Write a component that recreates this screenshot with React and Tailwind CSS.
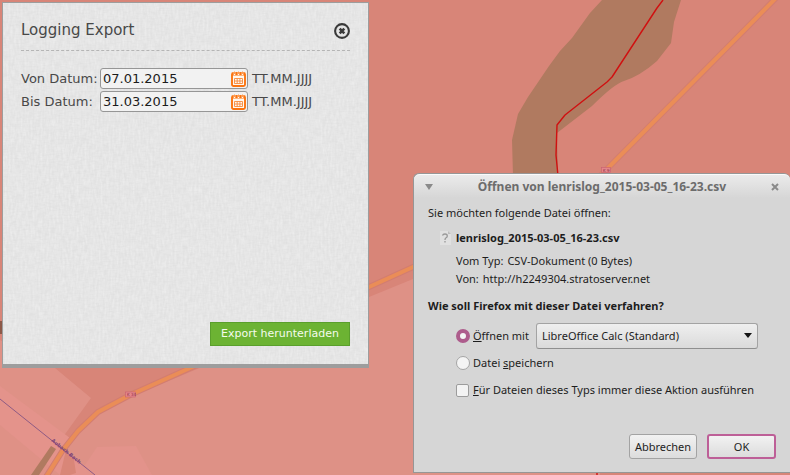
import { useState } from "react";

function MapBackground() {
  return (
    <svg
      className="absolute inset-0 h-full w-full"
      viewBox="0 0 790 475"
      preserveAspectRatio="xMinYMin slice"
      aria-hidden="true"
    >
      <rect width="790" height="475" fill="#d88578" />
      {/* fields */}
      <path d="M0 340L55 368L91 398L63 437L46 475H0Z" fill="#df9186" />
      <path d="M413 279L369 297L190 372L130 397L98 414L78 433L63 452L50 475H600V279Z" fill="#de9186" />
      <path d="M0 386L70 438L62 447L95 475H60L0 425Z" fill="#e4938b" />
      <path d="M60 475L66 450L74 460L76 473L70 475Z" fill="#d98678" />
      <path d="M85 465L97 447L136 446L152 475H88Z" fill="#e3938b" />
      <path d="M0 321H3V334H0Z" fill="#8d5948" />
      {/* forest */}
      <path
        d="M602 0L590 13L572 38L560 51L549 66L528 97L518 114L512 140L513 176H558L557 133L592 106Q614 84 624 81Q640 76 657 61L671 43L674 22L681 0Z"
        fill="#b07a60"
      />
      <path d="M51 446L56 449L39 475H31Z" fill="#b07a60" />
      {/* roads */}
      <g fill="none" strokeLinejoin="round">
        <path
          d="M776 -2L609 167L590 186L413 267L369 287L190 368L130 395L98 412L78 431L63 450L46 477"
          stroke="#d27d71"
          strokeWidth="6"
        />
        <path
          d="M776 -2L609 167L590 186L413 267L369 287L190 368L130 395L98 412L78 431L63 450L46 477"
          stroke="#ea8d57"
          strokeWidth="4"
        />
        <path d="M663 0L657 8L612 77L607 82L565 115L557 125L556 155L558 176" stroke="#d01010" strokeWidth="1.4" />
        <path d="M597 470V475" stroke="#d01010" strokeWidth="1.4" />
        <path d="M0 399L95 475" stroke="#8d5a83" strokeWidth="1" />
      </g>
      <g fill="#e3868a" stroke="#c95f70" strokeWidth="0.6">
        <rect x="125.500" y="392" width="10" height="5" />
        <rect x="601.500" y="167.500" width="9" height="5" />
      </g>
      <g fontFamily="DejaVu Sans, sans-serif" fontSize="4" fill="#8c2f4b">
        <text x="127" y="396">K 34</text>
        <text x="603" y="172">K 9</text>
      </g>
      <text
        transform="translate(51 441) rotate(39)"
        fontFamily="DejaVu Sans, sans-serif"
        fontSize="5"
        fontWeight="bold"
        fill="#7c4478"
      >
        Aubach Bach
      </text>
    </svg>
  );
}

function LinenTexture() {
  return (
    <svg className="absolute inset-0 h-full w-full" aria-hidden="true">
      <filter id="linen-v">
        <feTurbulence type="fractalNoise" baseFrequency="0.5 0.12" numOctaves="2" seed="4" />
        <feColorMatrix values="0 0 0 0 1  0 0 0 0 1  0 0 0 0 1  0.6 0 0 0 -0.2" />
      </filter>
      <filter id="linen-h">
        <feTurbulence type="fractalNoise" baseFrequency="0.15 0.6" numOctaves="2" seed="9" />
        <feColorMatrix values="0 0 0 0 0.6  0 0 0 0 0.6  0 0 0 0 0.6  0.4 0 0 0 -0.16" />
      </filter>
      <rect width="100%" height="100%" filter="url(#linen-v)" />
      <rect width="100%" height="100%" filter="url(#linen-h)" />
    </svg>
  );
}

function CalendarIcon() {
  return (
    <svg viewBox="0 0 15 16" className="h-4 w-[15px]" fill="none" aria-hidden="true">
      <rect x="1" y="2" width="13" height="13" rx="1.500" fill="#fff8f0" stroke="#fb7410" strokeWidth="1.900" />
      <path d="M1 2H14V4.500H1Z" fill="#fb7410" />
      <path d="M3.500 0.500V4M7.500 0.500V4M11.500 0.500V4" stroke="#fff8f0" strokeWidth="1.600" />
      <path d="M3.500 0.500V3M7.500 0.500V3M11.500 0.500V3" stroke="#fb7410" strokeWidth="0.700" />
      <path d="M3.500 7.500H11.500V12.500H3.500ZM3.500 10H11.500M6.200 7.500V12.500M8.900 7.500V12.500" stroke="#f78a3c" strokeWidth="0.900" />
    </svg>
  );
}

function DateRow({ id, label, value }) {
  const [date, setDate] = useState(value);
  return (
    <div className="flex h-[23px] items-center">
      <label htmlFor={id} className="w-[79px] whitespace-nowrap">
        {label}
      </label>
      <div className="flex h-[21px] w-[148px] items-center rounded-[3px] border border-[#969696] bg-[#f2f2f2] pr-px">
        <input
          id={id}
          type="text"
          value={date}
          onChange={(e) => setDate(e.target.value)}
          className="min-w-0 flex-1 bg-transparent pl-0.5 text-[#1c1c1c] outline-none"
        />
        <button type="button" aria-label={`${label} Kalender`}>
          <CalendarIcon />
        </button>
      </div>
      <span className="pl-1">TT.MM.JJJJ</span>
    </div>
  );
}

function ExportPanel() {
  return (
    <section className="absolute top-0.5 left-0.5 flex h-[366px] w-[367px] flex-col border border-b-4 border-[#9d9d9d] bg-[#e4e4e4] font-['DejaVu_Sans',sans-serif] text-[13px] text-[#484848]">
      <LinenTexture />
      <div className="relative flex flex-1 flex-col px-[18px] pb-[18px]">
        <header className="flex h-12 items-center justify-between border-b border-dashed border-[#b5b5b5] pt-2">
          <h1 className="text-[15px]">Logging Export</h1>
          <button type="button" aria-label="Schließen">
            <svg viewBox="0 0 16 16" className="size-4" fill="none" aria-hidden="true">
              <circle cx="8" cy="8" r="6.900" stroke="#393939" strokeWidth="2.100" />
              <path d="M5.700 5.700L10.300 10.300M10.300 5.700L5.700 10.300" stroke="#393939" strokeWidth="2.600" />
            </svg>
          </button>
        </header>
        <form className="flex flex-1 flex-col pt-4">
          <DateRow id="from" label="Von Datum:" value="07.01.2015" />
          <DateRow id="to" label="Bis Datum:" value="31.03.2015" />
          <button
            type="button"
            className="mt-auto h-6 w-[140px] self-end border border-[#5a9f2c] bg-[#6cb333] text-[11px] whitespace-nowrap text-[#f4fbed]"
          >
            Export herunterladen
          </button>
        </form>
      </div>
    </section>
  );
}

function OpenDialog() {
  const [action, setAction] = useState("open");
  const radio =
    "size-[14px] shrink-0 appearance-none rounded-full border border-[#a5a5a5] bg-[#f4f4f4] checked:border-4 checked:border-[#ad5c8c]";
  const button =
    "h-[25px] rounded-[3px] bg-linear-to-b from-[#f2f2f2] to-[#dcdcdc] text-center";
  return (
    <section
      role="dialog"
      aria-labelledby="dialog-title"
      className="absolute top-[173px] right-0 flex h-[300px] w-[377px] flex-col rounded-t-md border border-r-0 border-[#969696] bg-[#d6d6d6] font-['Noto_Sans',sans-serif] text-[11px] leading-4 text-[#1d1d1d]"
    >
      <header className="flex h-6 items-center rounded-t-md border-t border-[#fafafa] bg-linear-to-b from-[#ebebeb] to-[#d6d6d6] pr-[11px] pl-[11px]">
        <button type="button" aria-label="Menü">
          <svg viewBox="0 0 8 6" className="h-1.5 w-2" aria-hidden="true">
            <path d="M0 0H8L4 6Z" fill="#8a8a8a" />
          </svg>
        </button>
        <h2 id="dialog-title" className="flex-1 text-center text-[12px] font-bold whitespace-nowrap text-[#6c6c6c]">
          Öffnen von lenrislog_2015-03-05_16-23.csv
        </h2>
        <button type="button" aria-label="Schließen">
          <svg viewBox="0 0 8 8" className="size-2" aria-hidden="true">
            <path d="M1 1L7 7M7 1L1 7" stroke="#8a8a8a" strokeWidth="2" />
          </svg>
        </button>
      </header>
      <div className="flex flex-1 flex-col pr-[14px] pb-[13px] pl-[14px]">
        <p className="pt-[7px]">Sie möchten folgende Datei öffnen:</p>
        <div className="flex items-center gap-1 pt-[9px] pl-[11px]">
          <svg viewBox="0 0 13 16" className="h-4 w-[13px]" aria-hidden="true">
            <path d="M1 1H9L12 4V15H1Z" fill="#e0e0e0" />
            <path d="M9 1V4H12" fill="#bdbdbd" />
            <path d="M3.500 5.500Q4 4 6 4Q8.300 4 8.300 6Q8.300 7.200 6.800 8Q6 8.500 6 10M6 11V12.500" fill="none" stroke="#989898" strokeWidth="1.300" />
          </svg>
          <strong>lenrislog_2015-03-05_16-23.csv</strong>
        </div>
        <dl className="flex flex-col gap-0.5 pt-[7px] pl-7">
          <div className="flex gap-1">
            <dt>Vom Typ:</dt>
            <dd>CSV-Dokument (0 Bytes)</dd>
          </div>
          <div className="flex gap-1">
            <dt>Von:</dt>
            <dd>http://h2249304.stratoserver.net</dd>
          </div>
        </dl>
        <p className="pt-[11px] font-bold">Wie soll Firefox mit dieser Datei verfahren?</p>
        <div className="flex items-center pt-[9px] pl-7">
          <input
            id="open"
            type="radio"
            name="action"
            className={radio}
            checked={action === "open"}
            onChange={() => setAction("open")}
          />
          <label htmlFor="open" className="w-[66px] pl-[3px] whitespace-nowrap">
            <u>Ö</u>ffnen mit
          </label>
          <div className="relative flex-1 pr-[18px]">
            <select
              aria-label="Anwendung"
              className="block h-[26px] w-full appearance-none rounded-[3px] border border-[#a3a3a3] border-b-[#8f8f8f] bg-linear-to-b from-[#efefef] to-[#dadada] pl-[5px]"
            >
              <option>LibreOffice Calc (Standard)</option>
            </select>
            <svg viewBox="0 0 8 5" className="pointer-events-none absolute top-[10px] right-6 h-[5px] w-2" aria-hidden="true">
              <path d="M0 0H8L4 5Z" fill="#151515" />
            </svg>
          </div>
        </div>
        <div className="flex items-center pt-[6px] pl-7">
          <input
            id="save"
            type="radio"
            name="action"
            className={radio}
            checked={action === "save"}
            onChange={() => setAction("save")}
          />
          <label htmlFor="save" className="pl-[3px]">
            Datei <u>s</u>peichern
          </label>
        </div>
        <div className="flex items-center pt-[11px] pl-7">
          <input
            id="always"
            type="checkbox"
            className="size-[13px] shrink-0 appearance-none rounded-[2px] border border-[#9c9c9c] bg-[#f3f3f3] checked:bg-[#ad5c8c]"
          />
          <label htmlFor="always" className="pl-1 whitespace-nowrap">
            <u>F</u>ür Dateien dieses Typs immer diese Aktion ausführen
          </label>
        </div>
        <div className="mt-auto flex justify-end gap-[10px]">
          <button type="button" className={`${button} w-[68px] border border-[#a3a3a3]`}>
            Abbrechen
          </button>
          <button type="button" className={`${button} w-[69px] border-2 border-[#bd5f97]`}>
            OK
          </button>
        </div>
      </div>
    </section>
  );
}

export default function App() {
  return (
    <main className="relative h-screen w-full overflow-hidden bg-[#d88578]">
      <MapBackground />
      <ExportPanel />
      <OpenDialog />
    </main>
  );
}
